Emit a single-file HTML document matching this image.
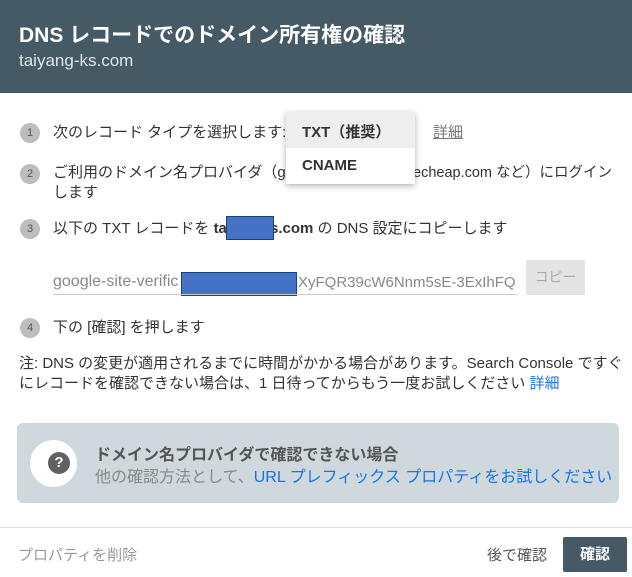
<!DOCTYPE html><html><head><meta charset="utf-8"><style>
body{margin:0;width:632px;height:577px;background:#fff;font-family:"Liberation Sans","Noto Sans CJK JP",sans-serif;position:relative;overflow:hidden;color:#333}
.a{position:absolute;white-space:nowrap}
.hd{position:absolute;left:0;top:0;width:632px;height:93px;background:#455a64}
.c{position:absolute;width:20px;height:20px;border-radius:50%;background:#bdbdbd;color:#555;font-size:11px;text-align:center;line-height:21px;left:20px}
.t{font-size:15px;color:#333}
</style></head><body>
<div class="hd"></div>
<div class="a" style="left:19px;top:19px;font-size:21px;font-weight:bold;color:#fff">DNS レコードでのドメイン所有権の確認</div>
<div class="a" style="left:19px;top:51px;font-size:17px;color:#e0e6e9">taiyang-ks.com</div>

<div class="c" style="top:123px">1</div>
<div class="a t" style="left:53px;top:121px">次のレコード タイプを選択します:</div>
<div class="a" style="left:433px;top:121px;font-size:15px;color:#777;text-decoration:underline">詳細</div>

<div class="c" style="top:164px">2</div>
<div class="a t" style="left:53px;top:161px">ご利用のドメイン名プロバイダ（g</div>
<div class="a t" style="left:413px;top:161px;font-size:14.5px">echeap.com など）にログイン</div>
<div class="a t" style="left:53px;top:181px">します</div>

<div class="c" style="top:219px">3</div>
<div class="a t" style="left:53px;top:217px">以下の TXT レコードを <b>ta</b></div>
<div class="a t" style="left:270px;top:217px"><b>s.com</b> の DNS 設定にコピーします</div>
<div class="a" style="left:226px;top:216px;width:46px;height:22px;background:#4472c4;border:1px solid #1f3f7a"></div>

<div class="a" style="left:53px;top:273px;font-size:16px;color:#888">google-site-verific</div>
<div class="a" style="left:298px;top:274px;font-size:15px;color:#888">XyFQR39cW6Nnm5sE-3ExIhFQ</div>
<div class="a" style="left:181px;top:272px;width:114px;height:22px;background:#4472c4;border:1px solid #1f3f7a"></div>
<div class="a" style="left:53px;top:294px;width:465px;height:1px;background:#ccc"></div>
<div class="a" style="left:526px;top:260px;width:59px;height:35px;background:#e4e4e4;border-radius:2px;color:#aaa;font-size:14px;text-align:center;line-height:35px">コピー</div>

<div class="c" style="top:318px">4</div>
<div class="a t" style="left:53px;top:316px">下の [確認] を押します</div>

<div class="a t" style="left:19px;top:352px">注: DNS の変更が適用されるまでに時間がかかる場合があります。Search Console ですぐ</div>
<div class="a t" style="left:19px;top:372px">にレコードを確認できない場合は、1 日待ってからもう一度お試しください <span style="color:#1a73e8">詳細</span></div>

<div class="a" style="left:17px;top:423px;width:602px;height:80px;background:#cfd8dc;border-radius:6px"></div>
<div class="a" style="left:30px;top:440px;width:47px;height:47px;border-radius:50%;background:#fff"></div>
<div class="a" style="left:48px;top:452px;width:22px;height:22px;border-radius:50%;background:#616161;color:#fff;font-weight:bold;font-size:15px;text-align:center;line-height:22px">?</div>
<div class="a" style="left:95px;top:441px;font-size:16px;font-weight:bold;color:#555">ドメイン名プロバイダで確認できない場合</div>
<div class="a" style="left:95px;top:463px;font-size:16px;color:#888">他の確認方法として、<span style="color:#1a73e8">URL プレフィックス プロパティをお試しください</span></div>

<div class="a" style="left:0;top:527px;width:632px;height:1px;background:#ddd"></div>
<div class="a" style="left:18px;top:544px;font-size:15px;color:#999">プロパティを削除</div>
<div class="a" style="left:487px;top:544px;font-size:15px;color:#555">後で確認</div>
<div class="a" style="left:563px;top:537px;width:64px;height:35px;background:#455a64;border-radius:2px;color:#fff;font-weight:bold;font-size:15px;text-align:center;line-height:35px">確認</div>

<div class="a" style="left:286px;top:112px;width:129px;height:72px;background:#fff;box-shadow:0 2px 6px rgba(0,0,0,.3)"></div>
<div class="a" style="left:286px;top:112px;width:129px;height:36px;background:#eee"></div>
<div class="a" style="left:302px;top:121px;font-size:15px;font-weight:bold;color:#333">TXT（推奨）</div>
<div class="a" style="left:302px;top:157px;font-size:15px;font-weight:bold;color:#333">CNAME</div>
</body></html>
